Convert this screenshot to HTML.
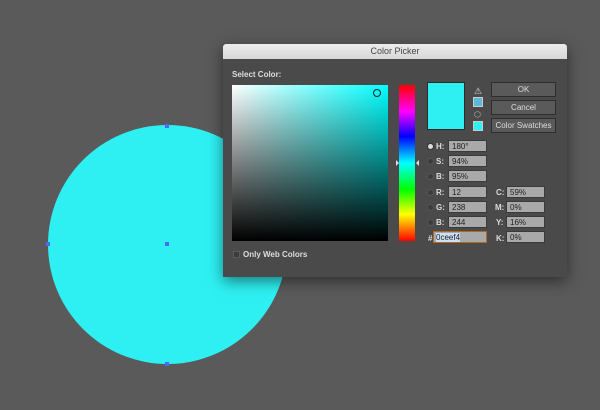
<!DOCTYPE html>
<html><head><meta charset="utf-8"><style>
*{margin:0;padding:0;box-sizing:border-box}
body{width:600px;height:410px;background:#5a5a5a;position:relative;overflow:hidden;font-family:"Liberation Sans",sans-serif;font-size:8px;color:#ddd}
.a{position:absolute}
.circ{left:48px;top:125px;width:239px;height:239px;border-radius:50%;background:#2ef0f3}
.pt{width:4px;height:4px;background:#4a6cf0}
.dlg{left:223px;top:44px;width:344px;height:233px;background:#4a4a4a;box-shadow:0 4px 14px rgba(0,0,0,.5)}
.title{left:0;top:0;width:344px;height:15px;background:linear-gradient(#ececec,#d8d8d8);border-radius:3px 3px 0 0;color:#444;font-size:9px;text-align:center;line-height:15px}
.fld{background:#a9a9a9;border:1px solid #3a3a3a;height:12px;width:39px;color:#222;font-size:8px;line-height:11px;padding-left:3px}
.lbl{font-size:8px;color:#ddd;font-weight:bold}
.rad{width:7px;height:7px;border-radius:50%;background:#3c3c3c;border:1px solid #555}
.btn{left:268px;width:65px;height:15px;background:#5a5a5a;border:1px solid #2e2e2e;color:#ddd;font-size:8px;text-align:center;line-height:13px}
</style></head><body>
<div class="a circ"></div>
<div class="a pt" style="left:165px;top:124px"></div>
<div class="a pt" style="left:165px;top:242px"></div>
<div class="a pt" style="left:46px;top:242px"></div>
<div class="a pt" style="left:165px;top:362px"></div>
<div class="a dlg">
 <div class="a title">Color Picker</div>
 <div class="a lbl" style="left:9px;top:26px">Select Color:</div>
 <div class="a" style="left:9px;top:41px;width:156px;height:156px;background:linear-gradient(to top,#000,rgba(0,0,0,0)),linear-gradient(to right,#fff,#00ffff)"></div>
 <div class="a" style="left:150px;top:45px;width:8px;height:8px;border-radius:50%;border:1px solid #222"></div>
 <div class="a" style="left:176px;top:41px;width:16px;height:156px;background:linear-gradient(#ff0000,#ff00ff 17%,#0000ff 33%,#00ffff 50%,#00ff00 67%,#ffff00 83%,#ff0000)"></div>
 <div class="a" style="left:173px;top:116px;width:0;height:0;border-top:3px solid transparent;border-bottom:3px solid transparent;border-left:3px solid #ddd"></div>
 <div class="a" style="left:193px;top:116px;width:0;height:0;border-top:3px solid transparent;border-bottom:3px solid transparent;border-right:3px solid #ddd"></div>
 <div class="a" style="left:10px;top:207px;width:7px;height:7px;background:#3c3c3c;border:1px solid #5a5a5a"></div>
 <div class="a lbl" style="left:20px;top:206px">Only Web Colors</div>
 <div class="a" style="left:204px;top:38px;width:38px;height:48px;background:#2ef0f3;border:1px solid #2a2a2a"></div>
 <div class="a" style="left:251px;top:42px;color:#ddd;font-size:9px">⚠</div>
 <div class="a" style="left:250px;top:53px;width:10px;height:10px;background:#5ab8d8;border:1px solid #ccc"></div>
 <div class="a" style="left:251px;top:66px;color:#bbb;font-size:8px">⬡</div>
 <div class="a" style="left:250px;top:77px;width:10px;height:10px;background:#2ef0f3;border:1px solid #ccc"></div>
 <div class="a btn" style="top:38px">OK</div>
 <div class="a btn" style="top:56px">Cancel</div>
 <div class="a btn" style="top:74px">Color Swatches</div>

 <div class="a rad" style="left:204px;top:99px;background:#ddd;border-color:#333"></div><div class="a lbl" style="left:213px;top:98px">H:</div><div class="a fld" style="left:225px;top:96px">180°</div>
 <div class="a rad" style="left:204px;top:114px"></div><div class="a lbl" style="left:213px;top:113px">S:</div><div class="a fld" style="left:225px;top:111px">94%</div>
 <div class="a rad" style="left:204px;top:129px"></div><div class="a lbl" style="left:213px;top:128px">B:</div><div class="a fld" style="left:225px;top:126px">95%</div>
 <div class="a rad" style="left:204px;top:145px"></div><div class="a lbl" style="left:213px;top:144px">R:</div><div class="a fld" style="left:225px;top:142px">12</div>
 <div class="a rad" style="left:204px;top:160px"></div><div class="a lbl" style="left:213px;top:159px">G:</div><div class="a fld" style="left:225px;top:157px">238</div>
 <div class="a rad" style="left:204px;top:175px"></div><div class="a lbl" style="left:213px;top:174px">B:</div><div class="a fld" style="left:225px;top:172px">244</div>
 <div class="a lbl" style="left:205px;top:190px">#</div><div class="a fld" style="left:210px;top:187px;width:54px;border-color:#b06a20;padding-left:2px"><span style="background:#cfe0f5">0ceef4</span></div>
 <div class="a lbl" style="left:273px;top:144px">C:</div><div class="a fld" style="left:283px;top:142px">59%</div>
 <div class="a lbl" style="left:272px;top:159px">M:</div><div class="a fld" style="left:283px;top:157px">0%</div>
 <div class="a lbl" style="left:273px;top:174px">Y:</div><div class="a fld" style="left:283px;top:172px">16%</div>
 <div class="a lbl" style="left:273px;top:190px">K:</div><div class="a fld" style="left:283px;top:187px">0%</div>
</div>
</body></html>
